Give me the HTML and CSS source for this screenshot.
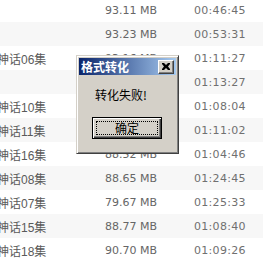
FILE: index.html
```html
<!DOCTYPE html>
<html>
<head>
<meta charset="utf-8">
<link rel="stylesheet" href="styles.css">
</head>
<body>
<div class="list">
  <div class="row"><span class="name"></span><span class="size">93.11 MB</span><span class="time">00:46:45</span></div>
  <div class="row"><span class="name"></span><span class="size">93.23 MB</span><span class="time">00:53:31</span></div>
  <div class="row"><span class="name">神话06集</span><span class="size">93.16 MB</span><span class="time">01:11:27</span></div>
  <div class="row"><span class="name"></span><span class="size">92.48 MB</span><span class="time">01:13:27</span></div>
  <div class="row"><span class="name">神话10集</span><span class="size">89.02 MB</span><span class="time">01:08:04</span></div>
  <div class="row"><span class="name">神话11集</span><span class="size">90.14 MB</span><span class="time">01:11:02</span></div>
  <div class="row"><span class="name">神话16集</span><span class="size">88.52 MB</span><span class="time">01:04:46</span></div>
  <div class="row"><span class="name">神话08集</span><span class="size">88.65 MB</span><span class="time">01:24:45</span></div>
  <div class="row"><span class="name">神话07集</span><span class="size">79.67 MB</span><span class="time">01:25:33</span></div>
  <div class="row"><span class="name">神话15集</span><span class="size">88.77 MB</span><span class="time">01:08:40</span></div>
  <div class="row"><span class="name">神话18集</span><span class="size">90.70 MB</span><span class="time">01:09:26</span></div>
</div>

<div class="dialog">
  <div class="titlebar">
    <span class="title">格式转化</span>
    <span class="close">
      <svg width="8" height="7" viewBox="0 0 8 7"><path d="M0 0h2l2 2 2-2h2v1l-2 2.5 2 2.5v1h-2l-2-2-2 2h-2v-1l2-2.5-2-2.5z" fill="#000"/></svg>
    </span>
  </div>
  <div class="body">
    <div class="message">转化失败!</div>
    <div class="button"><span class="focus">确定</span></div>
  </div>
</div>
</body>
</html>
```

FILE: styles.css
```css
html, body {
  margin: 0;
  padding: 0;
  background: #ffffff;
  overflow: hidden;
}

.list {
  margin-top: -2px;
}

.row {
  display: grid;
  grid-template-columns: 105px 51px 1fr;
  height: 24px;
  align-items: center;
  color: #666666;
  font-family: "DejaVu Sans", "Noto Sans CJK SC", sans-serif;
  font-size: 11px;
  white-space: nowrap;
}

.row:nth-child(even) {
  background: #f7f7f7;
}

.name {
  margin-left: -3px;
  font-family: "Liberation Sans", "Noto Sans CJK SC", sans-serif;
  font-size: 12px;
  color: #5a5a5a;
}

.size {
  text-align: right;
}

.time {
  padding-left: 38px;
  color: #707070;
  letter-spacing: 0.3px;
}

.dialog {
  position: absolute;
  left: 76px;
  top: 55px;
  width: 103px;
  height: 99px;
  box-sizing: border-box;
  background: #d4d0c8;
  border: 1px solid;
  border-color: #d4d0c8 #404040 #404040 #d4d0c8;
  box-shadow: inset 1px 1px 0 #ffffff, inset -1px -1px 0 #808080;
  padding: 2px;
  display: flex;
  flex-direction: column;
  font-family: "Noto Sans CJK SC", sans-serif;
}

.titlebar {
  height: 17px;
  background: linear-gradient(to right, #0a246a, #a6caf0);
  display: flex;
  align-items: center;
  justify-content: space-between;
  padding: 0 2px 0 2px;
}

.title {
  color: #ffffff;
  font-weight: bold;
  font-size: 12px;
  line-height: 14px;
}

.close {
  width: 16px;
  height: 14px;
  box-sizing: border-box;
  background: #d4d0c8;
  border: 1px solid;
  border-color: #ffffff #404040 #404040 #ffffff;
  box-shadow: inset -1px -1px 0 #808080;
  display: flex;
  align-items: center;
  justify-content: center;
}

.body {
  display: flex;
  flex-direction: column;
  align-items: flex-start;
  padding: 12px 0 0 13px;
}

.message {
  margin-left: 3px;
  font-size: 12px;
  line-height: 16px;
  color: #000000;
}

.button {
  margin-top: 14px;
  width: 70px;
  height: 22px;
  box-sizing: border-box;
  border: 1px solid #000000;
  box-shadow: inset 1px 1px 0 #ffffff, inset -1px -1px 0 #404040, inset -2px -2px 0 #808080;
  padding: 3px;
  display: flex;
}

.focus {
  flex: 1;
  border: 1px dotted #000000;
  display: flex;
  align-items: center;
  justify-content: center;
  font-size: 12px;
  line-height: 12px;
  color: #000000;
}
```
